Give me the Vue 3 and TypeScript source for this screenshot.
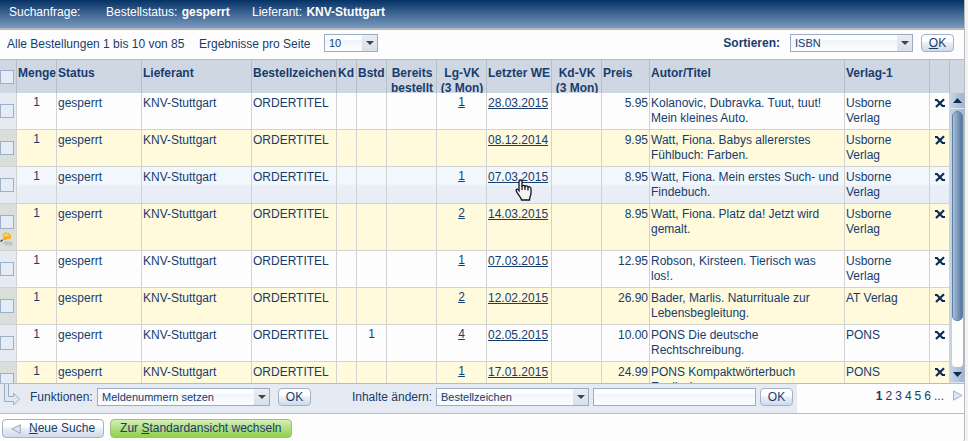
<script setup lang="ts">
import { ref } from 'vue'

interface Order {
  qty: number
  stock?: string
  sold?: string
  received: string
  price: string
  title: string
  publisher: string
  highlighted?: boolean
  note?: boolean
}

const orders: Order[] = [
  { qty: 1, sold: '1', received: '28.03.2015', price: '5.95', title: 'Kolanovic, Dubravka. Tuut, tuut! Mein kleines Auto.', publisher: 'Usborne Verlag' },
  { qty: 1, received: '08.12.2014', price: '9.95', title: 'Watt, Fiona. Babys allererstes Fühlbuch: Farben.', publisher: 'Usborne Verlag' },
  { qty: 1, sold: '1', received: '07.03.2015', price: '8.95', title: 'Watt, Fiona. Mein erstes Such- und Findebuch.', publisher: 'Usborne Verlag', highlighted: true },
  { qty: 1, sold: '2', received: '14.03.2015', price: '8.95', title: 'Watt, Fiona. Platz da! Jetzt wird gemalt.', publisher: 'Usborne Verlag', note: true },
  { qty: 1, sold: '1', received: '07.03.2015', price: '12.95', title: 'Robson, Kirsteen. Tierisch was los!.', publisher: 'Usborne Verlag' },
  { qty: 1, sold: '2', received: '12.02.2015', price: '26.90', title: 'Bader, Marlis. Naturrituale zur Lebensbegleitung.', publisher: 'AT Verlag' },
  { qty: 1, stock: '1', sold: '4', received: '02.05.2015', price: '10.00', title: 'PONS Die deutsche Rechtschreibung.', publisher: 'PONS' },
  { qty: 1, sold: '1', received: '17.01.2015', price: '24.99', title: 'PONS Kompaktwörterbuch Englisch.', publisher: 'PONS' },
]

const perPage = ref('10')
const sorting = ref('ISBN')
const action = ref('Meldenummern setzen')
const field = ref('Bestellzeichen')
const newValue = ref('')
const pages = [2, 3, 4, 5, 6]
</script>

<template>
  <main class="page">
    <div class="panel">
      <header class="query">
        <span class="query-name">Suchanfrage:</span>
        <span class="query-status">Bestellstatus: <b>gesperrt</b></span>
        <span>Lieferant: <b>KNV-Stuttgart</b></span>
      </header>

      <div class="toolbar">
        <span class="count">Alle Bestellungen 1 bis 10 von 85</span>
        <label class="per-page-label" for="per-page">Ergebnisse pro Seite</label>
        <span class="select per-page">
          <select id="per-page" v-model="perPage"><option>10</option><option>20</option></select>
        </span>
        <label class="sort-label" for="sorting">Sortieren:</label>
        <span class="select sorting">
          <select id="sorting" v-model="sorting"><option>ISBN</option><option>Titel</option></select>
        </span>
        <button type="button" class="btn ok"><u>O</u>K</button>
      </div>

      <div class="grid">
        <div class="grid-scroll">
          <table>
            <colgroup>
              <col class="w-check" /><col class="w-qty" /><col class="w-status" /><col class="w-supplier" />
              <col class="w-status" /><col class="w-kd" /><col class="w-bstd" /><col class="w-num" />
              <col class="w-num" /><col class="w-date" /><col class="w-num" /><col class="w-price" />
              <col /><col class="w-status" /><col class="w-x" />
            </colgroup>
            <thead>
              <tr>
                <th class="check"><input type="checkbox" aria-label="Alle" /></th>
                <th class="center">Menge</th>
                <th>Status</th>
                <th>Lieferant</th>
                <th>Bestellzeichen</th>
                <th>Kd</th>
                <th>Bstd</th>
                <th class="center"><div class="clip">Bereits<br />bestellt</div></th>
                <th class="center"><div class="clip">Lg-VK<br />(3 Mon)</div></th>
                <th>Letzter WE</th>
                <th class="center"><div class="clip">Kd-VK<br />(3 Mon)</div></th>
                <th>Preis</th>
                <th>Autor/Titel</th>
                <th>Verlag-1</th>
                <th></th>
              </tr>
            </thead>
            <tbody>
              <tr v-for="(o, i) in orders" :key="i" :class="{ lit: o.highlighted, tall: o.note }">
                <td class="check">
                  <input type="checkbox" :aria-label="o.title" />
                  <svg v-if="o.note" class="note" width="14" height="15" viewBox="0 0 14 15">
                    <path d="M2 11 L6 9 L13 10 L12 13.500 L6 13.500 Z" fill="#c3c5c5" />
                    <path d="M2 3 L5 0.500 L9 1 L11 4 L11 7 L8 6.500 L6 8 L2 8 L4 5 Z" fill="#f9ad1c" />
                    <path d="M3 2.500 L8 1.500 L9 4 L5 4.500 Z" fill="#ffd455" />
                    <path d="M0 9 L2 7.500 L3 8.500 L1 10 Z" fill="#4a3a28" />
                  </svg>
                </td>
                <td class="number">{{ o.qty }}</td>
                <td>gesperrt</td>
                <td>KNV-Stuttgart</td>
                <td>ORDERTITEL</td>
                <td></td>
                <td class="number">{{ o.stock }}</td>
                <td></td>
                <td class="number"><a v-if="o.sold" href="#">{{ o.sold }}</a></td>
                <td class="date">
                  <a href="#">{{ o.received }}</a>
                  <svg v-if="o.highlighted" class="pointer" width="17" height="22" viewBox="0 0 17 22">
                    <path d="M5.500 1 C6.600 1 7 1.600 7 2.500 V7.500 C7.500 5.800 9.700 6 10 7.500 C10.700 6.300 12.700 6.700 13 8.200 C14 7.300 16 8 16 9.800 V14 C16 16.500 14.500 18 14.500 21 H6.500 C6 18 2.500 15.500 1.200 11.800 C0.800 10.200 2.400 9.300 4 11.500 V2.500 C4 1.600 4.400 1 5.500 1 Z" fill="#f4f4f0" stroke="#111122" stroke-width="1.300" />
                    <path d="M7 7 V11 M10 7.500 V11 M13 8.500 V11.500" fill="none" stroke="#111122" stroke-width="1.200" />
                  </svg>
                </td>
                <td></td>
                <td class="price">{{ o.price }}</td>
                <td class="title">{{ o.title }}</td>
                <td>{{ o.publisher }}</td>
                <td class="remove">
                  <button type="button" aria-label="Entfernen">
                    <svg width="10" height="10" viewBox="0 0 10 10">
                      <path d="M0 2 H2 L7.500 8 H10" fill="none" stroke="#0b2b57" stroke-width="2" />
                      <path d="M9 1.200 L1 9" fill="none" stroke="#0b2b57" stroke-width="2.200" />
                    </svg>
                  </button>
                </td>
              </tr>
            </tbody>
          </table>
        </div>
        <div class="rail">
          <div class="rail-head"></div>
          <div class="rail-arrow">
            <svg width="9" height="5" viewBox="0 0 9 5"><path d="M0 5 L4.500 0 L9 5 Z" fill="#0b2b57" /></svg>
          </div>
          <div class="rail-track"><div class="rail-thumb"></div></div>
          <div class="rail-arrow">
            <svg width="9" height="5" viewBox="0 0 9 5"><path d="M0 0 L4.500 5 L9 0 Z" fill="#0b2b57" /></svg>
          </div>
        </div>
      </div>

      <footer class="actions">
        <div class="edit">
          <svg class="elbow" width="20" height="24" viewBox="0 0 20 24">
            <path d="M4.500 0 V17.500 H13.500 V21 L19.500 15 L13.500 9 V12.500 H8.500 V0" fill="#dfe7f1" stroke="#9aabc2" />
          </svg>
          <label class="fn-label" for="action">Funktionen:</label>
          <span class="select action">
            <select id="action" v-model="action"><option>Meldenummern setzen</option></select>
          </span>
          <button type="button" class="btn ok fn-ok">OK</button>
          <label class="field-label" for="field">Inhalte ändern:</label>
          <span class="select field">
            <select id="field" v-model="field"><option>Bestellzeichen</option></select>
          </span>
          <input v-model="newValue" class="value" type="text" aria-label="Neuer Inhalt" />
          <button type="button" class="btn ok">OK</button>
        </div>
        <nav class="pager">
          <b>1</b>
          <a v-for="p in pages" :key="p" href="#">{{ p }}</a>
          <span>...</span>
          <a class="next" href="#" aria-label="Weiter">
            <svg width="10" height="11" viewBox="0 0 10 11"><path d="M0.500 0.800 L9 5.500 L0.500 10.200 Z" fill="#dce5f0" stroke="#a3b2c7" /></svg>
          </a>
        </nav>
      </footer>

      <div class="bottom">
        <button type="button" class="btn back">
          <svg width="10" height="10" viewBox="0 0 10 10"><path d="M9.300 0.800 V9.200 L0.800 5 Z" fill="#dce5f0" stroke="#93a6bf" /></svg>
          <span><u>N</u>eue Suche</span>
        </button>
        <button type="button" class="btn green"><span>Zur <u>S</u>tandardansicht wechseln</span></button>
      </div>
    </div>
  </main>
</template>

<style>
body {
  background: #fdfdfd;
}
</style>

<style scoped>
* {
  box-sizing: border-box;
}
.page {
  padding-right: 3px;
  background: #f3f3f5;
  color: #173c6e;
  font: 12px/15px "Liberation Sans", Arial, sans-serif;
}
.panel {
  background: #fdfdfd;
  border-right: 1px solid #b9b9bb;
  border-bottom-right-radius: 4px;
}
.query {
  display: flex;
  height: 30px;
  padding: 5px 9px;
  border-bottom: 2px solid #b9babc;
  background: linear-gradient(#053266, #7b9bc0);
  color: #fff;
}
.query b {
  margin-left: 1px;
}
.query-name {
  width: 97px;
}
.query-status {
  width: 146px;
}
.toolbar {
  display: flex;
  align-items: center;
  height: 29px;
  padding: 0 10px 3px 7px;
}
.count {
  width: 192px;
  padding-top: 3px;
}
.per-page-label {
  width: 125px;
  padding-top: 3px;
}
.sort-label {
  margin: 0 10px 0 auto;
  font-weight: bold;
}
.select {
  position: relative;
  display: block;
  height: 18px;
}
.select::after {
  content: "";
  position: absolute;
  top: 7px;
  right: 4px;
  border: 4px solid transparent;
  border-top-color: #3c4450;
  border-bottom-width: 0;
  pointer-events: none;
}
select,
.value {
  display: block;
  width: 100%;
  height: 18px;
  margin: 0;
  padding: 0 4px;
  border: 1px solid #9aadc6;
  border-radius: 0;
  outline: 0;
  background: linear-gradient(#fcfdfe 30%, #eff5fb 30%, #fdfdfe);
  color: #173c6e;
  font: 11px "Liberation Sans", Arial, sans-serif;
  appearance: none;
}
select {
  background:
    linear-gradient(#e9edf3, #d8dfe9) right / 15px 100% no-repeat,
    linear-gradient(#fcfdfe 30%, #eff5fb 30%, #fdfdfe);
}
.per-page {
  width: 54px;
}
.sorting {
  width: 123px;
  margin-right: 8px;
}
.btn {
  display: flex;
  align-items: center;
  justify-content: center;
  height: 18px;
  margin: 0;
  padding: 0;
  border: 1px solid #a3b2c8;
  border-radius: 4px;
  background: linear-gradient(#fff 35%, #e6edf5 55%, #d0dbe9);
  color: #173c6e;
  font: 12px/15px "Liberation Sans", Arial, sans-serif;
}
.ok {
  width: 33px;
}
.grid {
  display: flex;
  height: 325px;
  border-top: 1px solid #b7bcc2;
  border-bottom: 1px solid #b7bcc2;
}
.grid-scroll {
  flex: 1;
  min-width: 0;
  overflow: hidden auto;
  scrollbar-width: none;
}
table {
  width: 100%;
  table-layout: fixed;
  border-collapse: separate;
  border-spacing: 0;
}
.w-check { width: 17px; }
.w-qty { width: 40px; }
.w-status { width: 85px; }
.w-supplier { width: 110px; }
.w-kd { width: 20px; }
.w-bstd { width: 30px; }
.w-num { width: 50px; }
.w-date { width: 65px; }
.w-price { width: 48px; }
.w-x { width: 20px; }
th,
td {
  padding: 3px 1px 0;
  border-right: 1px solid #d2d2d3;
  vertical-align: top;
  text-align: left;
}
th {
  height: 33px;
  padding: 6px 0 0 1px;
  border-right-color: #b6bfc9;
  background: #cfd8e2;
  white-space: nowrap;
}
.clip {
  height: 27px;
  overflow: hidden;
}
.center {
  text-align: center;
}
td {
  height: 37px;
  border-bottom: 1px solid #d2d2d3;
}
.tall td {
  height: 47px;
}
tbody tr:nth-child(even) td {
  background: #fefadb;
}
tbody td.check {
  border-bottom-color: #d2d2d3;
  background: #e6ebf3;
}
tbody tr:nth-child(even) td.check {
  background: #dadfdc;
}
.lit td {
  background: linear-gradient(#f2f7fc 48%, #ebf0f8 50%, #e8edf5);
}
th.check {
  padding: 10px 0 0;
}
td.check {
  padding: 11px 0 0;
}
.check input {
  display: block;
  width: 14px;
  height: 14px;
  margin: 0;
  border: 1px solid #9db0c9;
  background: #e5ecf6;
  appearance: none;
}
.note {
  display: block;
  margin-top: 3px;
}
a {
  color: inherit;
}
td.number {
  padding-top: 2px;
  text-align: center;
}
td.price {
  padding-right: 1px;
  text-align: right;
}
td.title {
  padding-right: 4px;
}
.date {
  position: relative;
}
.pointer {
  position: absolute;
  top: 12px;
  left: 28px;
}
td.remove {
  padding: 5px 0 0 5px;
}
.remove button {
  display: block;
  width: 10px;
  height: 10px;
  padding: 0;
  border: 0;
  background: none;
}
.remove svg {
  display: block;
}
.rail {
  display: flex;
  flex-direction: column;
  width: 14px;
  background: linear-gradient(90deg, #c9d4e1, #9fb5d4);
}
.rail-head {
  height: 33px;
  background: #cfd8e2;
}
.rail-arrow {
  display: flex;
  align-items: center;
  justify-content: center;
  height: 16px;
  border-bottom: 1px solid #dfe7f0;
}
.rail-track {
  flex: 1;
  margin: 2px 1px 0 2px;
  border-radius: 5px 5px 4px 4px;
  background: #fdfdfe;
}
.rail-thumb {
  height: 82%;
  border: 1px solid #5f7fa4;
  border-radius: 5px;
  background: linear-gradient(90deg, #a9bfd7, #53779f);
}
.actions {
  display: flex;
  height: 30px;
  border-bottom: 1px solid #b7bcc2;
}
.edit {
  display: flex;
  align-items: flex-start;
  width: 797px;
  padding: 4px 4px 0 0;
  background: #e6ebf3;
}
.elbow {
  margin: -4px 10px 0 0;
}
.fn-label {
  width: 67px;
  padding-top: 2px;
}
.action {
  width: 173px;
}
.fn-ok {
  margin-left: 8px;
}
.field-label {
  margin-left: auto;
  padding: 2px 4px 0 0;
}
.field {
  width: 153px;
}
.value {
  width: 163px;
  margin: 0 4px;
}
.pager {
  display: flex;
  gap: 3px;
  margin-left: auto;
  padding: 5px 1px 0 0;
}
.pager a {
  text-decoration: none;
}
.next {
  margin: 1px 0 0 6px;
}
.bottom {
  display: flex;
  gap: 6px;
  padding: 5px 2px 4px;
}
.back,
.green {
  height: 19px;
}
.back {
  gap: 8px;
  padding: 0 8px;
}
.green {
  padding: 0 9px;
  border-color: #9fc07c;
  background: linear-gradient(#d6efbb, #b4df85 45%, #8fd04c);
}
</style>
